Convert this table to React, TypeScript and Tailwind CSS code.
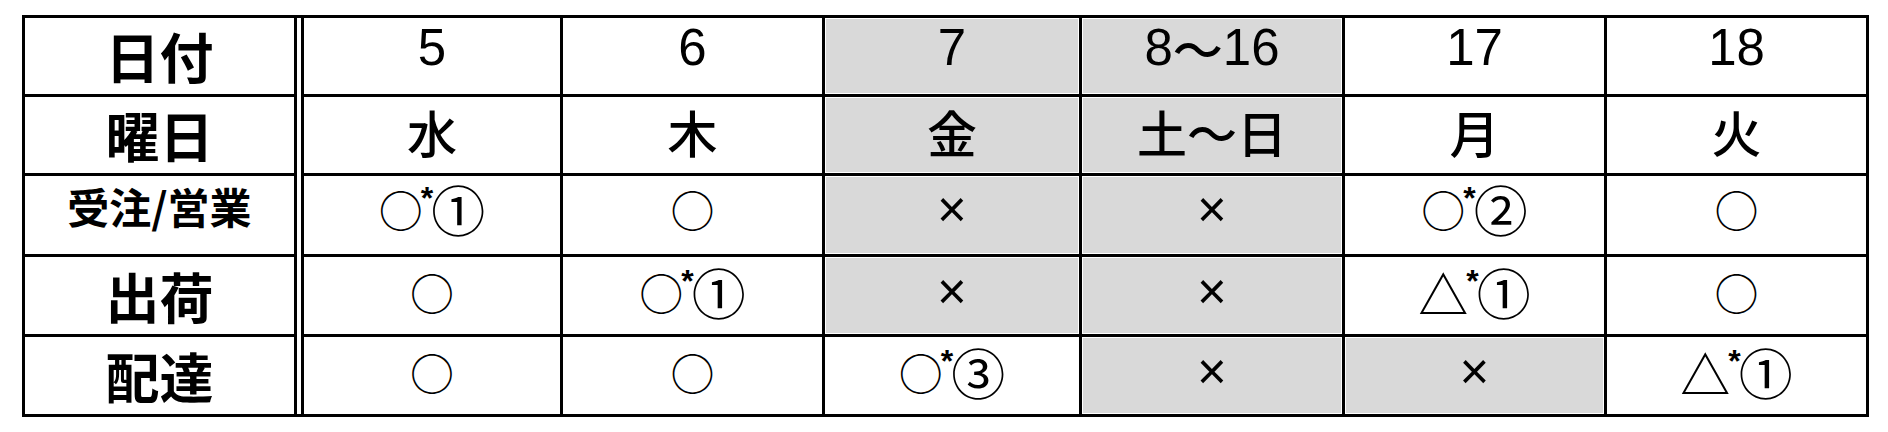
const JP = "font-['Noto_Sans_CJK_JP',sans-serif]";
const LAT = "font-['Liberation_Sans',sans-serif]";

const rowHeights = ["h-[79px]", "h-[79px]", "h-[81px]", "h-[80px]", "h-[77px]"];

const labels = [
  { text: "日付", size: "text-[54px]", pad: "pb-0" },
  { text: "曜日", size: "text-[54px]", pad: "pb-0" },
  { text: "受注/営業", size: "text-[42px]", pad: "pb-[18px]" },
  { text: "出荷", size: "text-[54px]", pad: "pb-0" },
  { text: "配達", size: "text-[54px]", pad: "pb-0" },
];

// g = grey (closed) cell
const rows: { t: string; g?: boolean }[][] = [
  [{ t: "5" }, { t: "6" }, { t: "7", g: true }, { t: "8～16", g: true }, { t: "17" }, { t: "18" }],
  [{ t: "水" }, { t: "木" }, { t: "金", g: true }, { t: "土～日", g: true }, { t: "月" }, { t: "火" }],
  [{ t: "○*①" }, { t: "○" }, { t: "×", g: true }, { t: "×", g: true }, { t: "○*②" }, { t: "○" }],
  [{ t: "○" }, { t: "○*①" }, { t: "×", g: true }, { t: "×", g: true }, { t: "△*①" }, { t: "○" }],
  [{ t: "○" }, { t: "○" }, { t: "○*③" }, { t: "×", g: true }, { t: "×", g: true }, { t: "△*①" }],
];

const rowPad = ["pb-[18px]", "pb-[8px]", "pb-[12px]", "pb-[8px]", "pb-[8px]"];

// digits and × look like Arial in the sheet, the rest comes from the CJK font
function Glyphs({ text }: { text: string }) {
  return (
    <span className="flex items-center leading-none">
      {Array.from(text).map((ch, i) => {
        if (ch === "*")
          return (
            <span key={i} className={`${LAT} text-[32px] font-bold self-start -mx-[2px]`}>
              *
            </span>
          );
        if (/[0-9×]/.test(ch))
          return (
            <span key={i} className={`${LAT} text-[51px]`}>
              {ch}
            </span>
          );
        if (ch === "○")
          return (
            <span key={i} className={`${JP} text-[44px]`}>
              {ch}
            </span>
          );
        if (/[①②③]/.test(ch))
          return (
            <span key={i} className={`${JP} text-[54px]`}>
              {ch}
            </span>
          );
        return (
          <span key={i} className={`${JP} text-[50px] font-medium`}>
            {ch}
          </span>
        );
      })}
    </span>
  );
}

export default function App() {
  return (
    <div className="min-h-[432px] w-[1888px] bg-white text-black pt-[15px] pl-[22px]">
      <div className="flex w-fit border-[3px] border-black">
        {/* row labels */}
        <div className="w-[272px] border-r-[3px] border-black flex flex-col">
          {labels.map((l, i) => (
            <div
              key={l.text}
              className={`${rowHeights[i]} ${i < 4 ? "border-b-[3px]" : ""} border-black flex items-center justify-center ${l.pad}`}
            >
              <span className={`${JP} ${l.size} font-bold leading-none`}>{l.text}</span>
            </div>
          ))}
        </div>

        <div className="w-[4px]" />

        {/* day columns */}
        <div className="border-l-[3px] border-black grid grid-cols-[259px_262px_257px_263px_262px_259px]">
          {rows.map((row, r) =>
            row.map((c, ci) => (
              <div
                key={`${r}-${ci}`}
                className={`${rowHeights[r]} ${ci < 5 ? "border-r-[3px]" : ""} ${r < 4 ? "border-b-[3px]" : ""} border-black flex items-center justify-center ${rowPad[r]} ${
                  c.g ? "bg-[#d9d9d9] shadow-[inset_0_0_0_1px_#ffffff]" : ""
                }`}
              >
                <Glyphs text={c.t} />
              </div>
            ))
          )}
        </div>
      </div>
    </div>
  );
}
